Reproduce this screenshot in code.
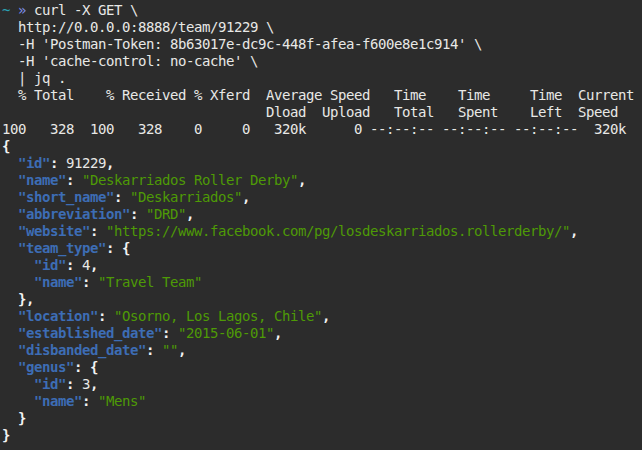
import React from "react";

const K = ({ children }) => <span className="text-[#3d6db5] font-bold">{children}</span>;
const S = ({ children }) => <span className="text-[#4e9a06]">{children}</span>;
const P = ({ children }) => <span className="text-[#f2f2f2] font-bold">{children}</span>;

const Row = ({ children }) => <div className="h-[17px] whitespace-pre">{children}</div>;

export default function App() {
  return (
    <div
      className="w-[642px] h-[450px] overflow-hidden bg-[#2c2c2c] text-[#e8e8e6] pl-[2px] pt-[2px] text-[14px] leading-[17px] tracking-[-0.43px]"
      style={{ fontFamily: '"DejaVu Sans Mono", "Liberation Mono", monospace' }}
    >
      <Row>
        <span className="text-[#2aa1b3]">~</span> <span className="text-[#7f8fe8]">»</span> curl -X GET \
      </Row>
      <Row>{"  http://0.0.0.0:8888/team/91229 \\"}</Row>
      <Row>{"  -H 'Postman-Token: 8b63017e-dc9c-448f-afea-f600e8e1c914' \\"}</Row>
      <Row>{"  -H 'cache-control: no-cache' \\"}</Row>
      <Row>{"  | jq ."}</Row>
      <Row>{"  % Total    % Received % Xferd  Average Speed   Time    Time     Time  Current"}</Row>
      <Row>{"                                 Dload  Upload   Total   Spent    Left  Speed"}</Row>
      <Row>{"100   328  100   328    0     0   320k      0 --:--:-- --:--:-- --:--:--  320k"}</Row>
      <Row><P>{"{"}</P></Row>
      <Row>{"  "}<K>"id"</K><P>: </P>91229<P>,</P></Row>
      <Row>{"  "}<K>"name"</K><P>: </P><S>"Deskarriados Roller Derby"</S><P>,</P></Row>
      <Row>{"  "}<K>"short_name"</K><P>: </P><S>"Deskarriados"</S><P>,</P></Row>
      <Row>{"  "}<K>"abbreviation"</K><P>: </P><S>"DRD"</S><P>,</P></Row>
      <Row>{"  "}<K>"website"</K><P>: </P><S>"https://www.facebook.com/pg/losdeskarriados.rollerderby/"</S><P>,</P></Row>
      <Row>{"  "}<K>"team_type"</K><P>: {"{"}</P></Row>
      <Row>{"    "}<K>"id"</K><P>: </P>4<P>,</P></Row>
      <Row>{"    "}<K>"name"</K><P>: </P><S>"Travel Team"</S></Row>
      <Row>{"  "}<P>{"},"}</P></Row>
      <Row>{"  "}<K>"location"</K><P>: </P><S>"Osorno, Los Lagos, Chile"</S><P>,</P></Row>
      <Row>{"  "}<K>"established_date"</K><P>: </P><S>"2015-06-01"</S><P>,</P></Row>
      <Row>{"  "}<K>"disbanded_date"</K><P>: </P><S>""</S><P>,</P></Row>
      <Row>{"  "}<K>"genus"</K><P>: {"{"}</P></Row>
      <Row>{"    "}<K>"id"</K><P>: </P>3<P>,</P></Row>
      <Row>{"    "}<K>"name"</K><P>: </P><S>"Mens"</S></Row>
      <Row>{"  "}<P>{"}"}</P></Row>
      <Row><P>{"}"}</P></Row>
    </div>
  );
}
